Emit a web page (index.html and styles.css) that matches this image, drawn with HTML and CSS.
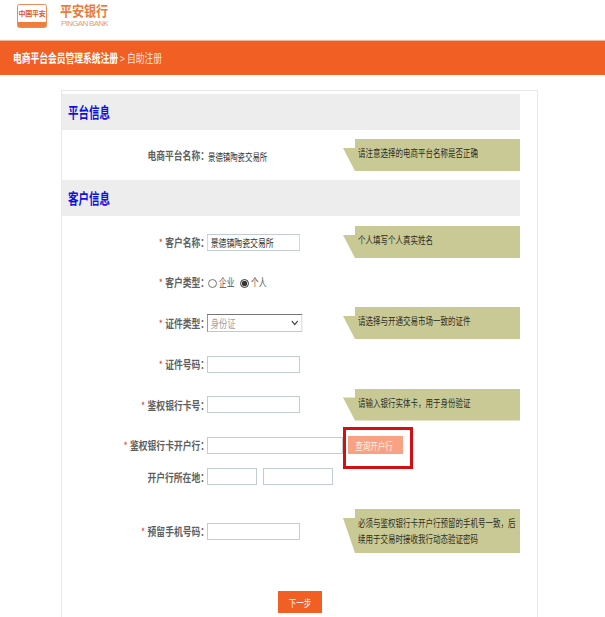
FILE: index.html
```html
<!DOCTYPE html>
<html lang="zh-CN">
<head>
<meta charset="utf-8">
<title>自助注册</title>
<link rel="stylesheet" href="styles.css">
</head>
<body>
<header class="top">
  <svg class="emblem" width="30" height="24" viewBox="0 0 30 24" aria-hidden="true">
    <rect x="0.5" y="0.5" width="29" height="23" rx="2" fill="#fff" stroke="#ee8a55"/>
    <rect x="1" y="18" width="28" height="5" fill="#ef7d3c"/>
    <text x="15" y="12" text-anchor="middle" class="emblem-text">中国平安</text>
  </svg>
  <div class="brand">
    <div class="brand-cn"><span>平安银行</span></div>
    <div class="brand-en">PINGAN BANK</div>
  </div>
</header>
<div class="bar"><span><b>电商平台会员管理系统注册</b> &gt; 自助注册</span></div>
<main class="panel">
  <h2 class="head"><span>平台信息</span></h2>
  <div class="form form-a">
    <div class="label"><span>电商平台名称：</span></div>
    <div class="field value"><span>景德镇陶瓷交易所</span></div>
    <div class="hint"><span>请注意选择的电商平台名称是否正确</span></div>
  </div>
  <h2 class="head"><span>客户信息</span></h2>
  <div class="form form-b">
    <div class="label"><span><i>*</i>客户名称：</span></div>
    <div class="field"><input class="text narrow" value="景德镇陶瓷交易所"></div>
    <div class="hint"><span>个人填写个人真实姓名</span></div>

    <div class="label"><span><i>*</i>客户类型：</span></div>
    <div class="field radios">
      <label class="radio"><input type="radio" name="t"><span>企业</span></label>
      <label class="radio"><input type="radio" name="t" checked><span>个人</span></label>
    </div>

    <div class="label"><span><i>*</i>证件类型：</span></div>
    <div class="field"><select class="select"><option>身份证</option></select></div>
    <div class="hint"><span>请选择与开通交易市场一致的证件</span></div>

    <div class="label"><span><i>*</i>证件号码：</span></div>
    <div class="field"><input class="text"></div>

    <div class="label"><span><i>*</i>鉴权银行卡号：</span></div>
    <div class="field"><input class="text"></div>
    <div class="hint"><span>请输入银行实体卡，用于身份验证</span></div>

    <div class="label"><span><i>*</i>鉴权银行卡开户行：</span></div>
    <div class="field"><input class="text wide"></div>
    <div class="query"><button class="query-btn" type="button"><span>查询开户行</span></button><span class="mark"></span></div>

    <div class="label"><span>开户行所在地：</span></div>
    <div class="field pair"><input class="text city"><input class="text area"></div>

    <div class="label"><span><i>*</i>预留手机号码：</span></div>
    <div class="field"><input class="text"></div>
    <div class="hint"><span>必须与鉴权银行卡开户行预留的手机号一致，后续用于交易时接收我行动态验证密码</span></div>
  </div>
  <div class="actions"><button class="next" type="button"><span>下一步</span></button></div>
</main>
</body>
</html>
```
FILE: styles.css
```css
html, body { margin: 0; padding: 0; background: #fff; overflow: hidden; height: 617px; }
body { font-family: "Liberation Sans", "Noto Sans CJK SC", sans-serif; color: #333; }

.top { height: 41px; display: flex; align-items: flex-start; padding-left: 17px; gap: 13px; box-sizing: border-box; }
.emblem { margin-top: 4px; }
.emblem-text { font: 700 7px "Noto Sans CJK SC", sans-serif; letter-spacing: -0.3px; fill: #e2552a; }
.brand { margin-top: 3px; color: #ec7a3c; }
.brand-cn { font: 700 14px/15px "Noto Sans CJK SC", sans-serif; }
.brand-cn span { display: inline-block; width: 48px; white-space: nowrap; transform: scaleX(.86); transform-origin: left; }
.brand-en { font: 400 8px/10px "Liberation Sans", sans-serif; letter-spacing: -0.7px; color: #eb9a6f; margin-top: 1px; padding-left: 1px; }

.bar { height: 34px; background: #f15f25; color: #fff; padding-left: 13px; font: 400 12px/33px "Noto Sans CJK SC", sans-serif; box-shadow: 0 -1px 1px #eeb9a0; white-space: nowrap; }
.bar span { display: inline-block; color: #fde6da; transform: scaleX(.73); transform-origin: left; }
.bar b { font-weight: 700; color: #fff; }

.panel { width: 458px; margin: 15px 0 0 61px; padding: 3px 17px 5px 0; border: 1px solid #e8e8e8; border-bottom: 0; height: 523px; }
.head { margin: 0; height: 36px; background: #ededed; color: #1010dc; font: 700 15px/36px "Noto Sans CJK SC", sans-serif; padding-left: 6px; }
.head span { display: inline-block; transform: scaleX(.7); transform-origin: left; }

.form { display: grid; grid-template-columns: 145px 136px 177px; }
.form > * { align-self: center; }
.form-a { grid-template-rows: 50px; }
.form-b { grid-template-rows: 52px 28px 54px 28px 53px 28px 35px 74px; }
.label { grid-column: 1; margin-right: -2px; text-align: right; white-space: nowrap; font: 700 11px/14px "Noto Sans CJK SC", sans-serif; color: #5f5f5f; }
.label span { display: inline-block; transform: scaleX(.8); transform-origin: right; }
.label i { color: #d8492f; font-style: normal; font-weight: 400; margin-right: 3px; }
.field { grid-column: 2; display: flex; align-items: center; }
.value { margin-top: 3px; padding-left: 1px; white-space: nowrap; font: 400 10px/14px "Noto Sans CJK SC", sans-serif; color: #333; }
.value span { display: inline-block; transform: scaleX(.74); transform-origin: left; }

.text { box-sizing: border-box; width: 93px; height: 17px; padding: 0 2px; margin: 0; border: 1px solid #c3ccd1; border-radius: 0; background: #fff; outline: 0; }
.narrow { width: 124px; padding: 0 4px; font: 400 10.5px "Noto Sans CJK SC", sans-serif; color: #333; transform: scaleX(.75); transform-origin: left; }
.wide { width: 136px; }
.city { width: 50px; }
.area { width: 70px; margin-left: 6px; }
.select { box-sizing: border-box; appearance: none; width: 127px; height: 18px; padding: 0 0 0 4px; margin: 0; border: 1px solid #c5c9cc; border-top-color: #777; border-left-color: #777; border-radius: 0; background: #fff url("data:image/svg+xml,%3Csvg xmlns='http://www.w3.org/2000/svg' width='10' height='6'%3E%3Cpath d='M1 1l4 3.6L9 1' fill='none' stroke='%23444' stroke-width='1.4'/%3E%3C/svg%3E") no-repeat right 4px center; font: 400 11px "Noto Sans CJK SC", sans-serif; color: #a0a0a0; transform: scaleX(.75); transform-origin: left; }

.radios { gap: 5px; }
.radio { display: flex; align-items: center; font: 400 11px/14px "Noto Sans CJK SC", sans-serif; color: #555; }
.radio input { width: 9px; height: 9px; margin: 2px 2px 0 1px; accent-color: #333; }
.radio span { display: inline-block; width: 15px; white-space: nowrap; transform: scaleX(.7); transform-origin: left; }

.hint { grid-column: 3; box-sizing: border-box; min-height: 32px; padding: 6px 2px 6px 15px; background: #c9c996; font: 400 10px/16px "Noto Sans CJK SC", sans-serif; color: #2e2e22; clip-path: polygon(12px 0, 100% 0, 100% 100%, 12px 100%, 0 9px, 12px 9px); }
.hint span { display: block; width: 133.33%; transform: scaleX(.75); transform-origin: left; }

.query { grid-column: 3; position: relative; display: flex; }
.query-btn { margin: 0 0 0 5px; width: 55px; height: 18px; padding: 0 3px 0 0; border: 0; background: #f9a283; color: #fff2ea; font: 400 10px "Noto Sans CJK SC", sans-serif; white-space: nowrap; }
.query-btn span { display: inline-block; transform: scaleX(.75); }
.mark { position: absolute; left: 0; top: -9px; width: 70px; height: 42px; box-sizing: border-box; border: 3px solid #d40f14; }

.actions { display: flex; justify-content: center; margin-top: 23px; padding-left: 18px; box-sizing: border-box; }
.next { width: 44px; height: 22px; padding: 0; border: 0; background: #f15f25; color: #fff; font: 400 10px "Noto Sans CJK SC", sans-serif; }
.next span { display: inline-block; transform: scaleX(.75); }
```
